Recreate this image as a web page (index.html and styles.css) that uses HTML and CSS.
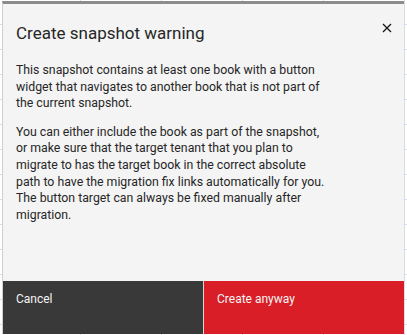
FILE: index.html
```html
<!DOCTYPE html>
<html>
<head>
<meta charset="utf-8">
<link rel="stylesheet" href="styles.css">
</head>
<body>
<div class="modal">
  <div class="modal-header">
    <h2 class="modal-title">Create snapshot warning</h2>
    <button class="modal-close" aria-label="Close">
      <svg width="10" height="10" viewBox="0 0 10 10"><path d="M1 1 L9 9 M9 1 L1 9" stroke="#161616" stroke-width="1.3" fill="none"/></svg>
    </button>
  </div>
  <div class="modal-content">
    <p>This snapshot contains at least one book with a button widget that navigates to another book that is not part of the current snapshot.</p>
    <p>You can either include the book as part of the snapshot, or make sure that the target tenant that you plan to migrate to has the target book in the correct absolute path to have the migration fix links automatically for you. The button target can always be fixed manually after migration.</p>
  </div>
  <div class="modal-footer">
    <button class="btn btn-secondary">Cancel</button>
    <button class="btn btn-danger">Create anyway</button>
  </div>
</div>
</body>
</html>
```
FILE: styles.css
```css
html, body {
  margin: 0;
  padding: 0;
  height: 100%;
}
body {
  background-color: #ffffff;
  background-image:
    repeating-linear-gradient(to right, transparent 0, transparent 80px, #d8dbe8 80px, #d8dbe8 81px),
    repeating-linear-gradient(to bottom, transparent 0, transparent 24px, #d8dbe8 24px, #d8dbe8 25px);
  font-family: Roboto, "Liberation Sans", sans-serif;
  overflow: hidden;
}
.modal {
  margin: 1px 3px 0 2px;
  height: 333px;
  box-sizing: border-box;
  border-top: 3px solid #8c8c8c;
  border-left: 1px solid #d0d0d0;
  background: #f4f4f4;
  display: flex;
  flex-direction: column;
}
.modal-header {
  display: flex;
  justify-content: space-between;
  align-items: flex-start;
  padding: 18px 12px 0 13px;
}
.modal-title {
  margin: 0;
  font-size: 17px;
  font-weight: 400;
  color: #262626;
  line-height: 22px;
}
.modal-close {
  border: 0;
  background: transparent;
  padding: 0;
  margin-top: 1px;
  width: 10px;
  height: 10px;
  display: flex;
}
.modal-content {
  flex: 1;
  padding: 18px 0 0 13px;
  width: 314px;
}
.modal-content p {
  margin: 0 0 12px;
  font-size: 12.3px;
  line-height: 16.6px;
  color: #262626;
}
.modal-footer {
  display: flex;
  height: 53px;
  gap: 1px;
  background: #d8d8d8;
}
.btn {
  flex: 1;
  border: 0;
  margin: 0;
  text-align: left;
  align-items: flex-start;
  padding: 11px 13px 0;
  font-family: inherit;
  font-size: 12px;
  color: #f4f4f4;
  display: flex;
}
.btn-secondary {
  background: #393939;
}
.btn-danger {
  background: #da1e28;
}
```
